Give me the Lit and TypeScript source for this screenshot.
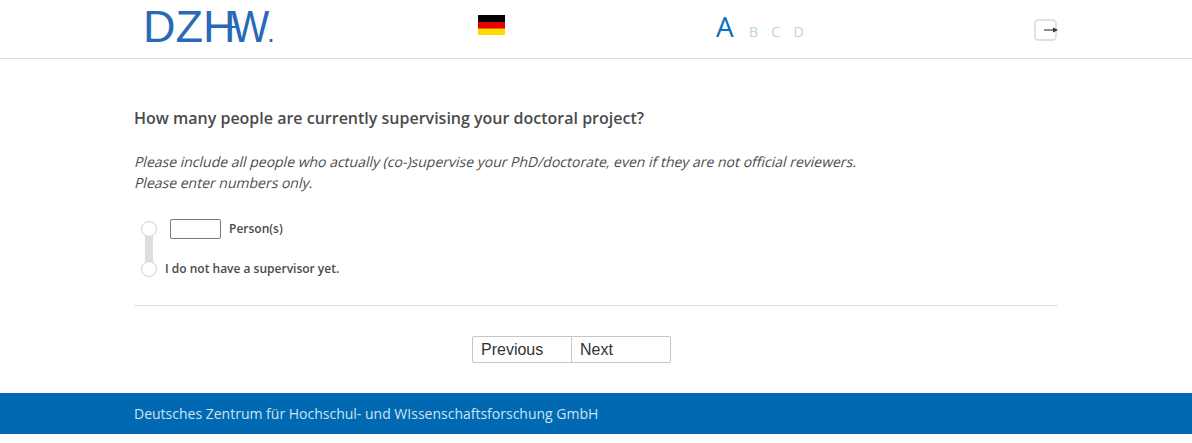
import {LitElement, css, html} from 'lit';
import {customElement} from 'lit/decorators.js';

@customElement('app-root')
export class AppRoot extends LitElement {
  static styles = css`
    :host {
      display: block;
      font-family: 'Open Sans', sans-serif;
      color: #4a4a4a;
      background: #fff;
    }
    .header {
      height: 58px;
      border-bottom: 1px solid #dcdcdc;
      display: grid;
      grid-template-columns: 143px 335px 238px 318px 1fr;
    }
    .logo-cell {
      grid-column: 2;
      display: flex;
      align-items: flex-start;
    }
    .logo {
      position: relative;
      display: block;
      font: 45px/54px 'Liberation Sans', sans-serif;
      color: #2a69b6;
      white-space: nowrap;
    }
    .logo .w {
      display: inline-block;
      margin-left: -4px;
      transform: scaleX(0.9);
      transform-origin: left;
    }
    .logo .dot {
      font-size: 28px;
      margin-left: -7px;
    }
    .logo::after {
      content: '';
      position: absolute;
      left: 85px;
      top: 26px;
      width: 10px;
      height: 2px;
      background: #2a69b6;
    }
    .flag-cell {
      grid-column: 3;
      padding-top: 15px;
    }
    .flag {
      display: block;
      width: 27px;
      height: 20px;
    }
    .steps {
      grid-column: 4;
      display: flex;
      align-items: baseline;
      gap: 13px;
      height: 41px;
      padding-top: 6px;
      color: #b5d6ee;
      font-size: 14.5px;
      line-height: 40px;
    }
    .steps .active {
      color: #0a71be;
      font-size: 28px;
      font-weight: 500;
      margin-right: 2px;
    }
    .exit-cell {
      grid-column: 5;
      padding-top: 19px;
    }
    .exit {
      display: block;
      width: 26px;
      height: 22px;
    }
    .main {
      width: 924px;
      margin: 0 0 0 134px;
      box-sizing: border-box;
    }
    h1 {
      margin: 0;
      padding-top: 48px;
      font-size: 16px;
      line-height: 22px;
      font-weight: 600;
    }
    .hint {
      margin: 22px 0 0;
      font-size: 14px;
      line-height: 21px;
      color: #4d4d4d;
    }
    /* the reference slants the upright face instead of using the italic one */
    .hint span {
      display: block;
      transform: skewX(-14deg);
      transform-origin: 0 75%;
    }
    .options {
      position: relative;
      display: grid;
      grid-template-columns: 29px 1fr;
      margin: 24px 0 0 7px;
      row-gap: 18px;
      font-size: 12px;
      font-weight: 600;
    }
    .options::before {
      content: '';
      position: absolute;
      left: 4px;
      top: 17px;
      width: 8px;
      height: 30px;
      background: #dedede;
    }
    .radio {
      position: relative;
      width: 16px;
      height: 16px;
      margin-top: 4px;
      box-sizing: border-box;
      border: 1px solid #d0d0d0;
      border-radius: 50%;
      background: #fff;
    }
    .row {
      display: flex;
      align-items: center;
      gap: 8px;
      height: 22px;
    }
    .row.last {
      margin-left: -5px;
    }
    .field {
      width: 51px;
      height: 20px;
      margin-top: 1px;
      box-sizing: border-box;
      border: 1px solid #767676;
      border-radius: 2px;
      background: #fff;
      padding: 0;
    }
    .rule {
      height: 1px;
      margin-top: 26px;
      background: #dcdcdc;
    }
    .nav {
      display: flex;
      margin-top: 30px;
      padding: 0 0 30px 338px;
    }
    .nav button {
      width: 100px;
      height: 27px;
      box-sizing: border-box;
      padding: 0 8px;
      border: 1px solid #c6c6c6;
      background: #fff;
      color: #333;
      font: 16px/25px 'Liberation Sans', sans-serif;
      text-align: left;
    }
    .nav button:first-child {
      border-radius: 2px 0 0 2px;
    }
    .nav button:last-child {
      margin-left: -1px;
      border-radius: 0 2px 2px 0;
    }
    .footer {
      height: 41px;
      margin-bottom: 9px;
      padding-left: 134px;
      background: #0069b1;
      color: #cfe3f2;
      font-size: 14px;
      line-height: 41px;
    }
  `;

  render() {
    return html`
      <header class="header">
        <div class="logo-cell">
          <span class="logo">DZH<span class="w">W</span><span class="dot">.</span></span>
        </div>
        <div class="flag-cell">
          <svg class="flag" viewBox="0 0 27 20" aria-label="Deutsch">
            <rect width="27" height="7" fill="#000"></rect>
            <rect y="7" width="27" height="7" fill="#e60000"></rect>
            <rect y="13.5" width="27" height="6.5" fill="#ffd900"></rect>
          </svg>
        </div>
        <div class="steps">
          <span class="active">A</span><span>B</span><span>C</span><span>D</span>
        </div>
        <div class="exit-cell">
          <svg class="exit" viewBox="0 0 26 22" fill="none">
            <rect x="1" y="1" width="21" height="20" rx="3.5" stroke="#d6d6d6" stroke-width="1.4"></rect>
            <path d="M10 11h10" stroke="#444" stroke-width="1.2"></path>
            <path d="M19 8.500l5 2.500-5 2.500z" fill="#333"></path>
          </svg>
        </div>
      </header>
      <main class="main">
        <h1>How many people are currently supervising your doctoral project?</h1>
        <p class="hint">
          <span>Please include all people who actually (co-)supervise your PhD/doctorate, even if they are not official reviewers.</span>
          <span>Please enter numbers only.</span>
        </p>
        <div class="options">
          <div class="radio"></div>
          <div class="row">
            <input class="field" type="text" aria-label="Person(s)" />
            <span>Person(s)</span>
          </div>
          <div class="radio"></div>
          <div class="row last"><span>I do not have a supervisor yet.</span></div>
        </div>
        <div class="rule"></div>
        <div class="nav">
          <button>Previous</button>
          <button>Next</button>
        </div>
      </main>
      <footer class="footer">Deutsches Zentrum für Hochschul- und WIssenschaftsforschung GmbH</footer>
    `;
  }
}
